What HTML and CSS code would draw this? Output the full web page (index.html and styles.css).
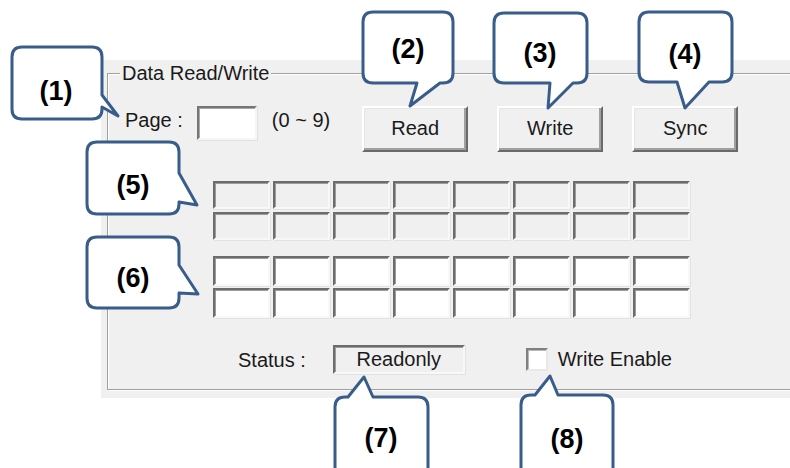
FILE: index.html
```html
<!DOCTYPE html>
<html lang="en">
<head>
    <meta charset="UTF-8">
    <title>Data Read/Write</title>
    <link rel="stylesheet" href="styles.css">
</head>
<body>
<div class="panel">
    <fieldset class="group">
        <legend>Data Read/Write</legend>
        <div class="row-page">
            <label class="lbl" for="page">Page :</label>
            <div class="page-box" id="page"></div>
            <span class="range">(0 ~ 9)</span>
            <button class="btn btn-read">Read</button>
            <button class="btn">Write</button>
            <button class="btn">Sync</button>
        </div>
        <div class="cells cells-ro">
            <div class="cell"></div><div class="cell"></div><div class="cell"></div><div class="cell"></div>
            <div class="cell"></div><div class="cell"></div><div class="cell"></div><div class="cell"></div>
            <div class="cell"></div><div class="cell"></div><div class="cell"></div><div class="cell"></div>
            <div class="cell"></div><div class="cell"></div><div class="cell"></div><div class="cell"></div>
        </div>
        <div class="cells cells-rw">
            <div class="cell"></div><div class="cell"></div><div class="cell"></div><div class="cell"></div>
            <div class="cell"></div><div class="cell"></div><div class="cell"></div><div class="cell"></div>
            <div class="cell"></div><div class="cell"></div><div class="cell"></div><div class="cell"></div>
            <div class="cell"></div><div class="cell"></div><div class="cell"></div><div class="cell"></div>
        </div>
        <div class="row-status">
            <span class="lbl">Status :</span>
            <span class="status-box">Readonly</span>
            <label class="chk"><span class="chk-box"></span>Write Enable</label>
        </div>
    </fieldset>
</div>

<!-- callouts -->
<svg class="callouts" width="790" height="468" viewBox="0 0 790 468">
    <g class="bubble">
        <path d="M22,47 H92 Q102,47 102,57 V95 L118,116 L102,107 V109 Q102,119 92,119 H22 Q12,119 12,109 V57 Q12,47 22,47 Z"/>
        <path d="M373,12 H443 Q453,12 453,22 V73 Q453,83 443,83 H440 L410,106 L417,83 H373 Q363,83 363,73 V22 Q363,12 373,12 Z"/>
        <path d="M504,13 H577 Q587,13 587,23 V73 Q587,83 577,83 H573 L548,108 L550,83 H504 Q494,83 494,73 V23 Q494,13 504,13 Z"/>
        <path d="M649,12 H722 Q732,12 732,22 V72 Q732,82 722,82 H709 L685,108 L677,82 H649 Q639,82 639,72 V22 Q639,12 649,12 Z"/>
        <path d="M97,142 H169 Q179,142 179,152 V173 L197,205 L179,202 V204 Q179,214 169,214 H97 Q87,214 87,204 V152 Q87,142 97,142 Z"/>
        <path d="M97,237 H169 Q179,237 179,247 V265 L198,294 L179,293 V298 Q179,308 169,308 H97 Q87,308 87,298 V247 Q87,237 97,237 Z"/>
        <path d="M345,397 H348 L364,377 L373,397 H418 Q428,397 428,407 V490 H335 V407 Q335,397 345,397 Z"/>
        <path d="M531,395 H535 L550,376 L558,395 H603 Q613,395 613,405 V490 H521 V405 Q521,395 531,395 Z"/>
    </g>
    <g class="num">
        <text x="56" y="100">(1)</text>
        <text x="408" y="58">(2)</text>
        <text x="540" y="62">(3)</text>
        <text x="685" y="63">(4)</text>
        <text x="133" y="194">(5)</text>
        <text x="133" y="287">(6)</text>
        <text x="381" y="447">(7)</text>
        <text x="567" y="448">(8)</text>
    </g>
</svg>
</body>
</html>
```

FILE: styles.css
```css
html, body {
    margin: 0;
    background: #fff;
    overflow: hidden;
}
body {
    position: relative;
    width: 790px;
    height: 468px;
    font-family: "Liberation Sans", Arial, sans-serif;
    font-size: 20px;
    color: #1a1a1a;
}
.panel {
    margin: 60px 0 0 101px;
    width: 689px;
    height: 338px;
    box-sizing: border-box;
    padding: 2px 0 0 6px;
    background: #f0f0f0;
    overflow: hidden;
}
.group {
    margin: 0;
    padding: 0;
    width: 720px;
    height: 328px;
    box-sizing: border-box;
    border: 1px solid #a0a0a0;
    box-shadow: inset 1px 1px 0 #fff, 1px 1px 0 #fff;
}
.group legend {
    margin-left: 12px;
    padding: 0 2px;
    line-height: 22px;
    background: #f0f0f0;
}
.row-page {
    display: flex;
    align-items: flex-start;
    height: 46px;
    margin: 22px 0 0 17px;
}
.lbl {
    line-height: 28px;
}
.page-box {
    width: 60px;
    height: 34px;
    margin-left: 14px;
    box-sizing: border-box;
    background: #fff;
    border: 2px solid;
    border-color: #767676 #f6f6f6 #f6f6f6 #767676;
    box-shadow: inset 1px 1px 0 #a8a8a8, 1px 1px 0 #e2e2e2;
}
.range {
    margin-left: 15px;
    line-height: 28px;
}
.btn {
    width: 106px;
    height: 46px;
    margin-left: 29px;
    padding: 0 0 2px 0;
    box-sizing: border-box;
    font: inherit;
    color: inherit;
    background: #f0f0f0;
    border: 2px solid;
    border-color: #fff #6a6a6a #6a6a6a #fff;
    box-shadow: inset -2px -2px 0 #a0a0a0, inset 1px 1px 0 #e6e6e6;
}
.btn-read {
    margin-left: 32px;
}
.cells {
    display: grid;
    grid-template-columns: repeat(8, 57px);
    column-gap: 3px;
    margin-left: 105px;
}
.cells-ro {
    margin-top: 29px;
    grid-template-rows: 28px 28px;
    row-gap: 3px;
}
.cells-rw {
    margin-top: 16px;
    grid-template-rows: 30px 30px;
    row-gap: 2px;
}
.cell {
    box-sizing: border-box;
    border: 2px solid;
    border-color: #6c6c6c #f8f8f8 #f8f8f8 #6c6c6c;
    box-shadow: inset 1px 1px 0 #9c9c9c, 1px 1px 0 #e2e2e2;
}
.cells-ro .cell {
    background: #f0f0f0;
}
.cells-rw .cell {
    background: #fff;
}
.row-status {
    display: flex;
    align-items: center;
    height: 29px;
    margin: 27px 0 0 130px;
}
.status-box {
    width: 132px;
    height: 29px;
    margin-left: 27px;
    box-sizing: border-box;
    display: flex;
    align-items: center;
    justify-content: center;
    border: 2px solid;
    border-color: #6c6c6c #f8f8f8 #f8f8f8 #6c6c6c;
    box-shadow: inset 1px 1px 0 #9c9c9c, 1px 1px 0 #e2e2e2;
}
.chk {
    display: flex;
    align-items: center;
    margin-left: 61px;
}
.chk-box {
    width: 22px;
    height: 23px;
    margin-right: 10px;
    box-sizing: border-box;
    background: #fff;
    border: 2px solid;
    border-color: #808080 #e8e8e8 #e8e8e8 #808080;
    box-shadow: inset 1px 1px 0 #b8b8b8;
}
.callouts {
    position: absolute;
    top: 0;
    left: 0;
    pointer-events: none;
}
.bubble path {
    fill: #fff;
    stroke: #385d8a;
    stroke-width: 3;
    stroke-linejoin: round;
}
.num text {
    font-family: "Liberation Sans", Arial, sans-serif;
    font-weight: bold;
    font-size: 27px;
    text-anchor: middle;
    fill: #000;
}
```
